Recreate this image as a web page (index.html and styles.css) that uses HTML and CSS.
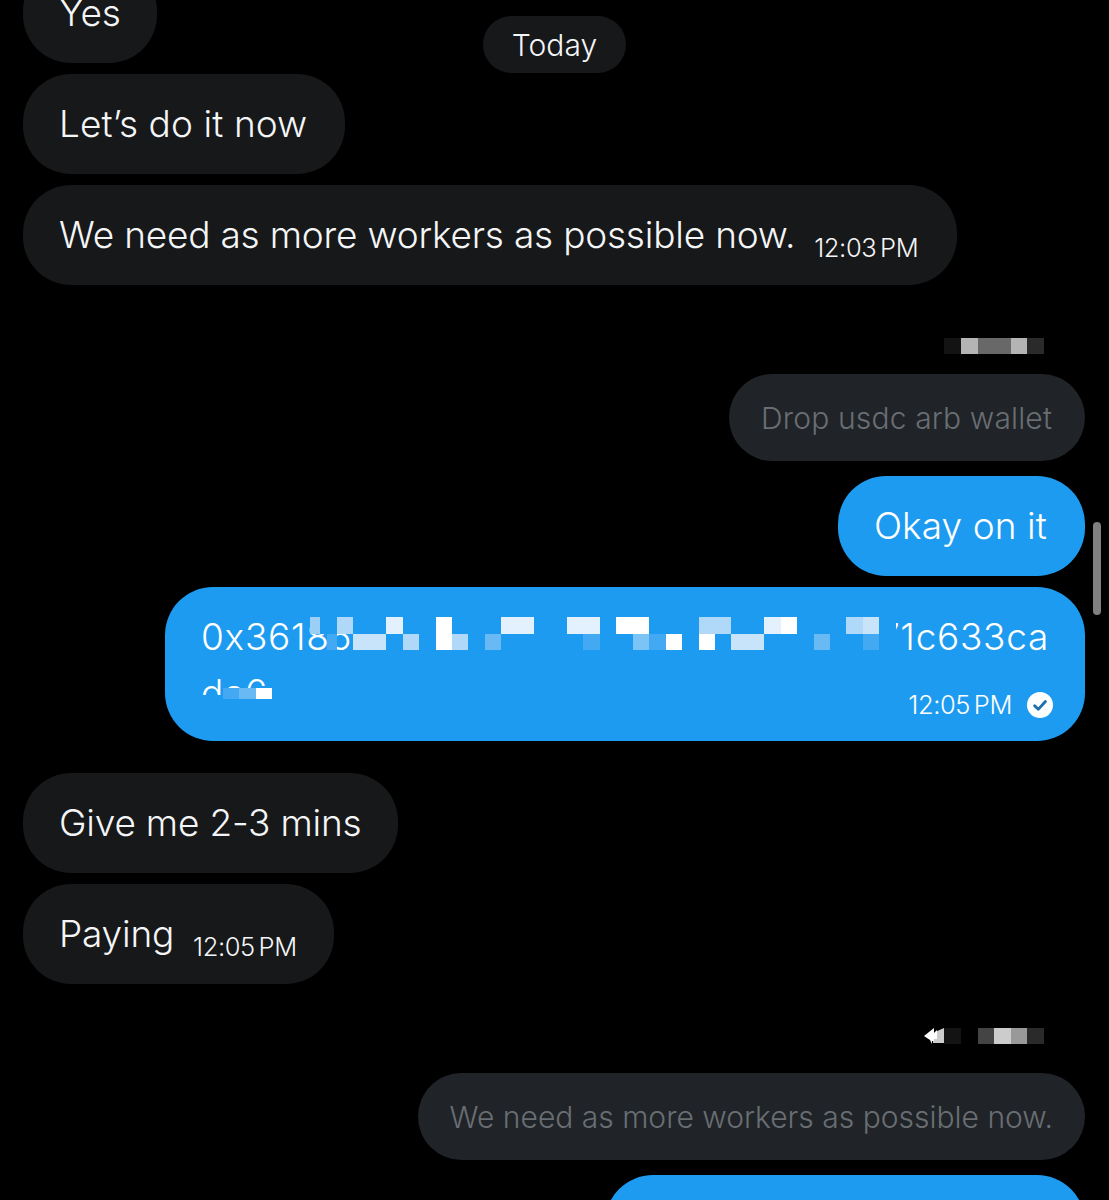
FILE: index.html
```html
<!DOCTYPE html>
<html lang="en">
<head>
<meta charset="utf-8">
<title>Chat</title>
<link rel="stylesheet" href="styles.css">
</head>
<body>
<main class="chat">
  <div class="pill">Today</div>
  <div class="scrollbar"></div>

  <div class="msg in short">Yes</div>
  <div class="msg in wide">Let’s do it now</div>
  <div class="msg in timed"><span>We need as more workers as possible now.</span><time>12:03 PM</time></div>

  <div class="replyhead first">
    <div class="mosaic"><i class="g1"></i><i class="g5"></i><i class="g3"></i><i class="g3"></i><i class="g5"></i><i class="g2"></i></div>
  </div>
  <div class="quote q1">Drop usdc arb wallet</div>
  <div class="msg out wide">Okay on it</div>

  <div class="msg out wallet">
    <div class="addr"><span>0x36185</span><span>71c633ca</span></div>
    <div class="addr2">da6</div>
    <div class="meta"><time>12:05 PM</time>
      <svg class="check" viewBox="0 0 24 24" aria-hidden="true"><circle cx="12" cy="12" r="12" fill="#fff"/><path d="M7 12.6l3.4 3.4L17 8.8" fill="none" stroke="#1d6fb0" stroke-width="2.6" stroke-linecap="round" stroke-linejoin="round"/></svg>
    </div>
    <div class="blur">
      <i class="p1a"></i><i></i><i class="p3"></i><i></i><i></i><i class="p5"></i><i></i><i></i><i class="p6"></i><i></i><i></i><i></i><i class="p5"></i><i class="p5"></i><i></i><i></i><i class="p5"></i><i class="p5"></i><i></i><i class="p6"></i><i class="p6"></i><i></i><i></i><i></i><i class="p3"></i><i class="p3"></i><i></i><i></i><i class="p5"></i><i class="p6"></i><i></i><i></i><i></i><i class="p3"></i><i class="p4"></i><i></i>
      <i class="clear"></i><i class="p0a"></i><i class="clear"></i><i class="p4"></i><i class="p4"></i><i></i><i class="p3"></i><i></i><i class="p6"></i><i class="p3"></i><i></i><i class="p2"></i><i></i><i></i><i></i><i></i><i></i><i class="p0"></i><i></i><i></i><i class="p1"></i><i class="p0"></i><i class="p6"></i><i></i><i class="p6"></i><i></i><i class="p4"></i><i class="p4"></i><i></i><i></i><i></i><i class="p2"></i><i></i><i></i><i class="p0"></i><i></i>
    </div>
    <div class="blur2"><i class="p0"></i><i class="p2"></i><i class="p6"></i></div>
  </div>

  <div class="msg in">Give me 2-3 mins</div>
  <div class="msg in timed paying"><span>Paying</span><time>12:05 PM</time></div>

  <div class="replyhead second">
    <svg class="arrow" viewBox="0 0 20 16" aria-hidden="true"><path d="M11 4L20 0v15H9v-3z" fill="#ccc"/><path d="M0 8L10 0v5l3-3v9h-3v2H8v3L6 12z" fill="#fff"/></svg>
    <div class="mosaic"><i class="g1"></i><i class="g0"></i><i class="g2b"></i><i class="g6"></i><i class="g4"></i><i class="g2"></i></div>
  </div>
  <div class="quote q2">We need as more workers as possible now.</div>
  <div class="msg out last"></div>
</main>
</body>
</html>
```

FILE: styles.css
```css
* { box-sizing: border-box; }
html, body { margin: 0; height: 1200px; overflow: hidden; background: #000; }
body { font-family: Inter, "Liberation Sans", sans-serif; color: #f4f5f6; }

.chat {
  position: relative;
  height: 1237px;
  overflow: hidden;
  margin-top: -37px;
  padding: 0 24px 0 23px;
  display: flex;
  flex-direction: column;
  align-items: flex-start;
}
.chat > * { flex: none; }

.msg {
  height: 100px;
  margin-bottom: 11px;
  padding: 0 37px 2px 36px;
  border-radius: 48px;
  background: #17181a;
  display: flex;
  align-items: center;
  font-size: 37px;
  font-weight: 350;
  letter-spacing: -.2px;
  white-space: nowrap;
}
.short { padding-right: 36px; }
.wide { letter-spacing: .1px; padding-right: 38px; }
.timed { gap: 19px; padding-right: 39px; }
.paying { padding-right: 37px; }
.timed time { align-self: flex-end; margin-bottom: 20px; }
time { font-size: 25.5px; font-weight: 300; word-spacing: -3px; letter-spacing: -.4px; }

.out { align-self: flex-end; background: #1d9bf0; color: #fff; }

.replyhead {
  align-self: flex-end;
  display: flex;
  align-items: center;
  height: 16px;
  margin-right: 41px;
}
.replyhead.first { margin-top: 42px; margin-bottom: 20px; }
.replyhead.second { margin-top: 33px; margin-bottom: 29px; }
.mosaic { display: flex; }
.mosaic i { display: block; width: 16.6px; height: 16px; }
.g0 { background: #000; }
.g1 { background: #131313; }
.g2 { background: #2a2a2a; }
.g2b { background: #444; }
.g3 { background: #686868; }
.g4 { background: #999; }
.g5 { background: #b4b4b4; }
.g6 { background: #ccc; }
.arrow { width: 20px; height: 16px; }

.quote {
  align-self: flex-end;
  height: 87px;
  margin-bottom: 15px;
  border-radius: 44px;
  background: #202327;
  color: #696e73;
  display: flex;
  align-items: center;
  font-size: 30px;
  font-weight: 300;
  white-space: nowrap;
}
.q1 { padding: 0 33px 0 32px; letter-spacing: .15px; }
.q2 { padding: 0 32px 0 32px; }

.wallet {
  position: relative;
  width: 920px;
  height: 154px;
  margin-bottom: 32px;
  padding: 28px 36px 0 36px;
  display: block;
}
.addr { display: flex; justify-content: space-between; height: 44px; line-height: 44px; letter-spacing: .7px; }
.addr2 { height: 24px; line-height: 44px; overflow: hidden; margin-top: 12px; margin-right: 760px; letter-spacing: .7px; }
.meta { display: flex; justify-content: flex-end; align-items: center; gap: 15px; margin-top: -6px; margin-right: -4px; }
.check { width: 26px; height: 26px; }

.blur {
  position: absolute;
  left: 139px;
  top: 30px;
  display: grid;
  grid-template-columns: repeat(36, 16.45px);
  grid-auto-rows: 16.5px;
}
.blur i, .blur2 i { display: block; background: #1d9bf0; }
.blur i.clear { background: transparent; }
.blur i.p1a { background: linear-gradient(90deg, transparent 6px, #9ccff6 6px); }
.blur i.p0a { background: linear-gradient(90deg, transparent 7px, #42a9f2 7px); }
.blur2 {
  position: absolute;
  left: 58px;
  top: 101px;
  display: grid;
  grid-template-columns: repeat(3, 16.45px);
  grid-auto-rows: 11px;
}
.blur i.p0, .blur2 i.p0 { background: #42a9f2; }
.blur i.p1 { background: #7cc4f5; }
.blur i.p2, .blur2 i.p2 { background: #68b9f4; }
.blur i.p3 { background: #b0d8f8; }
.blur i.p4 { background: #c8e4fb; }
.blur i.p5 { background: #e2f1fd; }
.blur i.p6, .blur2 i.p6 { background: #fff; }

.last { width: 480px; margin-bottom: 0; }

.pill {
  position: absolute;
  left: 483px;
  top: 53px;
  width: 143px;
  height: 57px;
  border-radius: 29px;
  background: #17181a;
  display: flex;
  align-items: center;
  justify-content: center;
  font-size: 30px;
  font-weight: 300;
}
.scrollbar {
  position: absolute;
  left: 1093px;
  top: 559px;
  width: 8px;
  height: 93px;
  border-radius: 4px;
  background: #808080;
}
```
